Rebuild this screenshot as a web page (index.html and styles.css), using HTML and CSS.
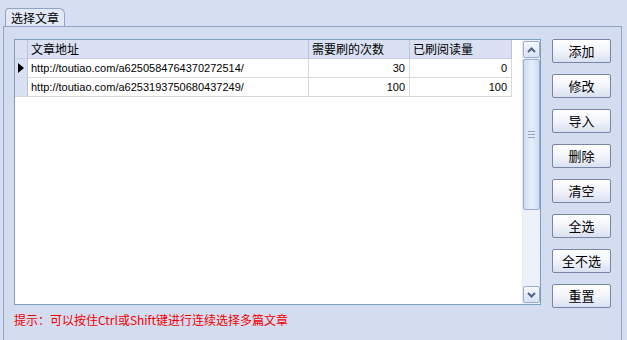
FILE: index.html
```html
<!DOCTYPE html>
<html lang="zh-CN">

<head>
    <meta charset="UTF-8">
    <title>选择文章</title>
    <link rel="stylesheet" href="styles.css">
</head>

<body>

    <div class="tabs">
        <div class="tab">选择文章</div>
    </div>

    <div class="panel">
        <div class="main">
            <div class="grid">
                <div class="table-area">
                    <div class="row head">
                        <div class="cell rh"></div>
                        <div class="cell c1">文章地址</div>
                        <div class="cell c2">需要刷的次数</div>
                        <div class="cell c3">已刷阅读量</div>
                    </div>
                    <div class="row">
                        <div class="cell rh"><span class="arrow"></span></div>
                        <div class="cell c1">http://toutiao.com/a6250584764370272514/</div>
                        <div class="cell c2 num">30</div>
                        <div class="cell c3 num">0</div>
                    </div>
                    <div class="row">
                        <div class="cell rh"></div>
                        <div class="cell c1">http://toutiao.com/a6253193750680437249/</div>
                        <div class="cell c2 num">100</div>
                        <div class="cell c3 num">100</div>
                    </div>
                </div>

                <div class="scrollbar">
                    <div class="sb-btn">
                        <svg width="9" height="6" viewBox="0 0 9 6"><path d="M1 5 L4.5 1.5 L8 5" fill="none" stroke="#4d6185" stroke-width="2"/></svg>
                    </div>
                    <div class="sb-track">
                        <div class="sb-thumb"><span class="grip"></span></div>
                    </div>
                    <div class="sb-btn">
                        <svg width="9" height="6" viewBox="0 0 9 6"><path d="M1 1 L4.5 4.5 L8 1" fill="none" stroke="#4d6185" stroke-width="2"/></svg>
                    </div>
                </div>
            </div>
            <p class="hint">提示：可以按住Ctrl或Shift键进行连续选择多篇文章</p>
        </div>

        <div class="buttons">
            <button class="btn">添加</button>
            <button class="btn">修改</button>
            <button class="btn">导入</button>
            <button class="btn">删除</button>
            <button class="btn">清空</button>
            <button class="btn">全选</button>
            <button class="btn">全不选</button>
            <button class="btn">重置</button>
        </div>
    </div>

</body>

</html>
```

FILE: styles.css
```css
body {
    margin: 0;
    width: 627px;
    height: 340px;
    overflow: hidden;
    background-color: #d6def1;
    font-family: "Noto Sans CJK SC", sans-serif;
    font-size: 12px;
    color: #000;
}

.tabs {
    display: flex;
    padding: 8px 0 0 5px;
    height: 18px;
}

.tab {
    width: 60px;
    height: 18px;
    box-sizing: border-box;
    border: 1px solid #91a3c6;
    border-bottom: none;
    border-radius: 4px 6px 0 0;
    background-color: #e2e8f6;
    line-height: 17px;
    padding-left: 5px;
    font-size: 12px;
}

.panel {
    display: flex;
    margin-left: 3px;
    width: 619px;
    height: 314px;
    box-sizing: border-box;
    border: 1px solid #91a3c6;
    border-bottom: none;
    padding: 12px 0 0 10px;
    background-color: #d4dcf0;
}

.main {
    width: 527px;
}

.grid {
    display: flex;
    width: 527px;
    height: 266px;
    box-sizing: border-box;
    border: 1px solid #7f9db9;
    background-color: #fff;
}

.table-area {
    flex: 1;
}

.row {
    display: flex;
    width: 497px;
    height: 19px;
    border-bottom: 1px solid #d8d8d8;
    box-sizing: border-box;
    font-family: "Liberation Sans", Arial, sans-serif;
    font-size: 11px;
}

.row.head {
    background-color: #d9e1f2;
    border-bottom: 1px solid #c3cde3;
    font-family: "Noto Sans CJK SC", sans-serif;
    font-size: 12px;
}

.cell {
    box-sizing: border-box;
    border-right: 1px solid #d8d8d8;
    padding: 0 3px;
    line-height: 18px;
    white-space: nowrap;
    overflow: hidden;
}

.head .cell {
    border-right-color: #b9c4dc;
}

.rh {
    width: 13px;
    padding: 0;
    background-color: #d9e1f2;
    border-right-color: #b9c4dc;
    display: flex;
    align-items: center;
    justify-content: center;
}

.c1 {
    width: 281px;
}

.c2 {
    width: 101px;
}

.c3 {
    width: 102px;
}

.num {
    text-align: right;
    padding-right: 4px;
}

.arrow {
    width: 0;
    height: 0;
    border-top: 5px solid transparent;
    border-bottom: 5px solid transparent;
    border-left: 6px solid #000;
}

.scrollbar {
    display: flex;
    flex-direction: column;
    width: 17px;
    background-color: #eef1f9;
    border-left: 1px solid #e4e9f4;
}

.sb-btn {
    height: 17px;
    margin: 1px 0;
    box-sizing: border-box;
    border: 1px solid #9aaed3;
    border-radius: 2px;
    background: linear-gradient(to bottom, #f6f8fd, #d8e2f5);
    display: flex;
    align-items: center;
    justify-content: center;
}

.sb-track {
    flex: 1;
}

.sb-thumb {
    height: 151px;
    box-sizing: border-box;
    border: 1px solid #98add6;
    border-radius: 2px;
    background: linear-gradient(to right, #cfdcf4, #e8eefa 50%, #cfdcf4);
    display: flex;
    align-items: center;
    justify-content: center;
}

.grip {
    width: 7px;
    height: 5px;
    border-top: 1px solid #8ea2c8;
    border-bottom: 1px solid #8ea2c8;
    position: relative;
}

.grip::after {
    content: "";
    position: absolute;
    left: 0;
    right: 0;
    top: 2px;
    border-top: 1px solid #8ea2c8;
}

.hint {
    margin: 6px 0 0 0;
    color: #f00000;
    font-size: 12px;
}

.buttons {
    display: flex;
    flex-direction: column;
    gap: 11px;
    margin-left: 11px;
}

.btn {
    width: 59px;
    height: 24px;
    padding: 0;
    border: 1px solid #7886a6;
    border-radius: 2px;
    background: linear-gradient(to bottom, #ffffff, #f2f4fb 50%, #d9e0f1);
    font-family: "Noto Sans CJK SC", sans-serif;
    font-size: 13px;
    color: #000;
    line-height: 22px;
}
```
